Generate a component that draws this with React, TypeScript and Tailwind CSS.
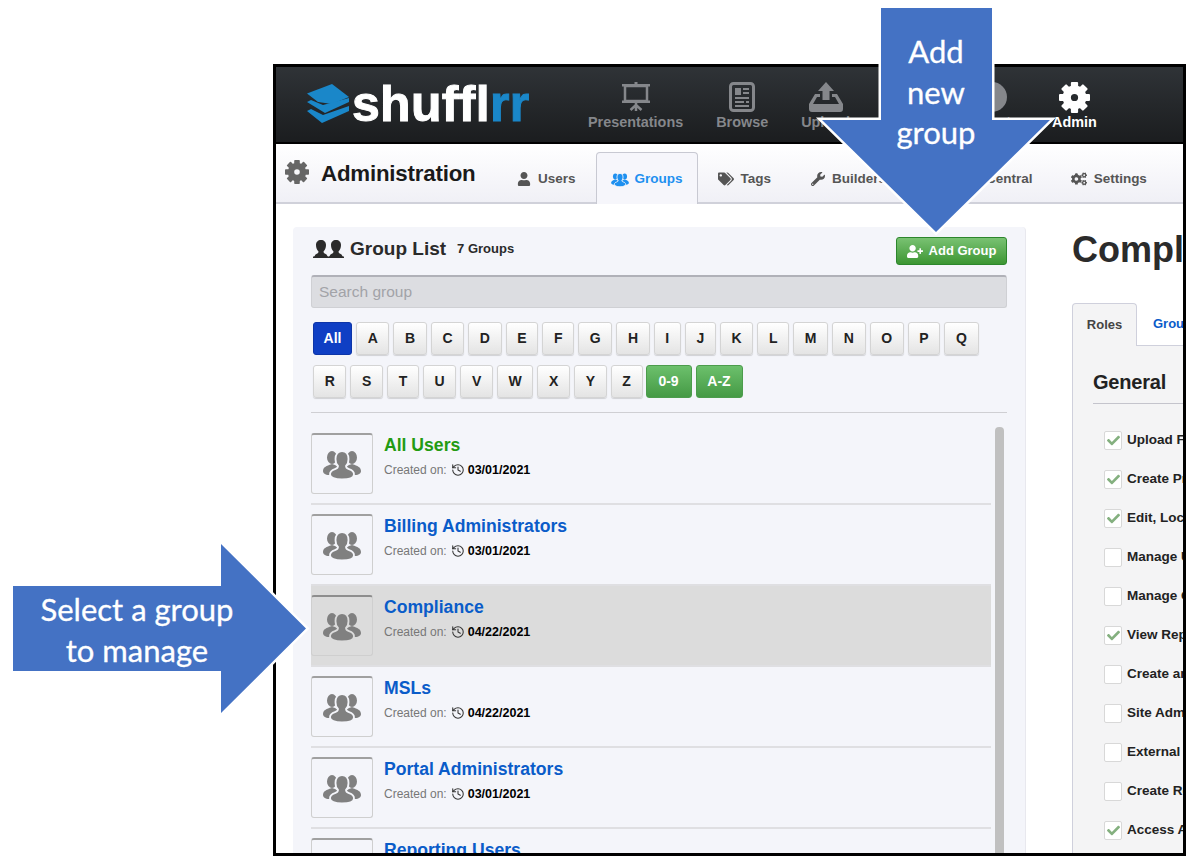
import React from 'react';
import { FaCheck, FaCogs, FaTags, FaUser, FaUserPlus, FaWrench } from 'react-icons/fa';
import { History } from 'lucide-react';

const letters1 = ['A', 'B', 'C', 'D', 'E', 'F', 'G', 'H', 'I', 'J', 'K', 'L', 'M', 'N', 'O', 'P', 'Q'];
const letters2 = ['R', 'S', 'T', 'U', 'V', 'W', 'X', 'Y', 'Z'];

const groups = [
  { name: 'All Users', date: '03/01/2021', green: true },
  { name: 'Billing Administrators', date: '03/01/2021' },
  { name: 'Compliance', date: '04/22/2021', selected: true },
  { name: 'MSLs', date: '04/22/2021' },
  { name: 'Portal Administrators', date: '03/01/2021' },
  { name: 'Reporting Users', date: '03/01/2021' },
];

const roles = [
  { label: 'Upload Files', on: true },
  { label: 'Create Presentations', on: true },
  { label: 'Edit, Lock and Delete', on: true },
  { label: 'Manage Users' },
  { label: 'Manage Groups' },
  { label: 'View Reports', on: true },
  { label: 'Create and Share' },
  { label: 'Site Administration' },
  { label: 'External Sharing' },
  { label: 'Create Reports' },
  { label: 'Access Analytics', on: true },
];

const GearIcon = ({ className }: { className: string }) => (
  <svg viewBox="0 0 30 30" className={className} fill="currentColor">
    <circle cx="15" cy="15" r="7.500" fill="none" stroke="currentColor" strokeWidth="8" />
    {[0, 45, 90, 135, 180, 225, 270, 315].map((a) => (
      <rect key={a} x="11.500" y="0" width="7" height="8" rx="1" transform={`rotate(${a} 15 15)`} />
    ))}
  </svg>
);

const PeopleIcon = ({ className, gap }: { className: string; gap: string }) => (
  <svg viewBox="0 0 38 32" className={className} fill="currentColor">
    <ellipse cx="9" cy="9.500" rx="5" ry="6.500" />
    <path d="M0 23c0-4 4-5 6-6l3-1 3 1 5 3v7H6c-4 0-6-2-6-4z" />
    <ellipse cx="29" cy="9.500" rx="5" ry="6.500" />
    <path d="M38 23c0-4-4-5-6-6l-3-1-3 1-5 3v7h11c4 0 6-2 6-4z" />
    <path className={gap} strokeWidth="1.800" d="M19 3c4 0 6.500 3.500 6.500 8 0 3-1 5.500-2.500 7 0 2 1 2.500 3 3.200 3 1 5 2.500 5 5 0 3.300-5 5.300-12 5.300s-12-2-12-5.300c0-2.500 2-4 5-5 2-.7 3-1.200 3-3.200-1.500-1.500-2.500-4-2.500-7 0-4.500 2.500-8 6.500-8z" />
  </svg>
);

const BoardIcon = () => (
  <svg viewBox="0 0 30 32" className="w-[30px] h-[32px]" fill="none" stroke="currentColor">
    <path d="M13.500 1h3v3h-3z" fill="currentColor" stroke="none" />
    <rect x="1" y="3" width="28" height="2.500" fill="currentColor" stroke="none" />
    <rect x="4" y="5" width="22" height="15" strokeWidth="2.500" />
    <rect x="1" y="19.500" width="28" height="2.500" fill="currentColor" stroke="none" />
    <path d="M15 22v8M9.500 29l5.500-5 5.500 5" strokeWidth="2.500" />
  </svg>
);

const BrowseIcon = () => (
  <svg viewBox="0 0 26 30" className="w-[26px] h-[30px]" fill="none">
    <rect x="1.500" y="1.500" width="23" height="27" rx="3" stroke="currentColor" strokeWidth="3" />
    <path fill="currentColor" d="M6 6h6v7H6zM14 6h6v2h-6zM14 10h6v2h-6zM6 15h14v2H6zM6 19h9v2H6zM17 19h3v2h-3zM6 23h14v2H6z" />
  </svg>
);

const UploadIcon = () => (
  <svg viewBox="0 0 34 30" className="w-[34px] h-[30px]" fill="currentColor">
    <path d="M17 0l8 9h-4.500v9h-7V9H9z" />
    <path d="M6 12h5v3H8l-4 7h26l-4-7h-3v-3h5l6 10v5c0 2-1 3-3 3H3c-2 0-3-1-3-3v-5z" />
  </svg>
);

const ClockIcon = () => (
  <svg viewBox="0 0 30 30" className="w-[30px] h-[30px]" fill="currentColor">
    <circle cx="15" cy="15" r="15" />
  </svg>
);

const NavItem = ({ label, icon, active }: { label: string; icon: React.ReactNode; active?: boolean }) => (
  <div className={`flex flex-col items-center gap-[1px] ${active ? 'text-white' : 'text-[#85878b]'}`}>
    <div className="h-[32px] flex items-center justify-center">{icon}</div>
    <span className="text-[14.400px] leading-[16px] font-bold whitespace-nowrap">{label}</span>
  </div>
);

const SubTab = ({ label, icon, active, className = '' }: { label: string; icon: React.ReactNode; active?: boolean; className?: string }) => (
  <div
    className={
      active
        ? 'flex items-center gap-[6px] h-[52px] -mb-[2px] z-10 px-[14px] pt-[2px] rounded-t-[4px] border border-b-0 border-[#c8c9d2] bg-[#f6f6fb] text-[#1e90f0]'
        : `flex items-center gap-[7px] h-[52px] -mb-[2px] px-[20px] pt-[2px] text-[#555] ${className}`
    }
  >
    {icon}
    <span className="text-[13.500px] font-bold whitespace-nowrap">{label}</span>
  </div>
);

const LetterBtn = ({ label }: { label: string }) => (
  <div className="h-[33px] px-[10.650px] flex items-center justify-center rounded-[3px] border border-[#d4d4d4] bg-linear-to-b from-white to-[#e4e4e4] text-[14px] font-bold text-[#222] shadow-[0_1px_1px_rgba(0,0,0,0.15)]">
    {label}
  </div>
);

const GreenBtn = ({ label, className }: { label: string; className: string }) => (
  <div className={`h-[33px] flex items-center justify-center rounded-[3px] border border-[#4c9c4c] bg-linear-to-b from-[#6cc06c] to-[#459a45] text-[14px] font-bold text-white ${className}`}>
    {label}
  </div>
);

const GroupRow = ({ name, date, green, selected }: { name: string; date: string; green?: boolean; selected?: boolean }) => (
  <div className={`h-[81px] flex gap-[11px] pt-[9px] border-b-2 border-[#dfdfe2] ${selected ? 'bg-[#dcdcdc]' : ''}`}>
    <div className={`w-[62px] h-[61px] shrink-0 flex items-center justify-center rounded-[3px] border border-[#cfcfcf] border-t-2 ${selected ? 'bg-[#dcdcdc] border-[#b4b4b4] border-t-[#8e8e8e]' : 'bg-[#f4f5fa] border-t-[#a0a0a0]'}`}>
      <PeopleIcon className="w-[38px] h-[32px] text-[#808080]" gap={selected ? 'stroke-[#dcdcdc]' : 'stroke-[#f4f5fa]'} />
    </div>
    <div className="flex flex-col pt-[1px]">
      <span className={`text-[17.600px] leading-[22px] font-bold ${green ? 'text-[#239b12]' : 'text-[#0a5cc9]'}`}>{name}</span>
      <div className="flex items-center mt-[5px] text-[12px] leading-[18px]">
        <span className="text-[#777]">Created on:</span>
        <History className="w-[14px] h-[14px] ml-[4px] mr-[3px] text-[#333]" strokeWidth={1.8} />
        <span className="text-[12.500px] font-bold text-black">{date}</span>
      </div>
    </div>
  </div>
);

const RoleRow = ({ label, on }: { label: string; on?: boolean }) => (
  <div className="h-[39px] flex items-center gap-[5px] pl-[11px]">
    <div className="w-[18px] h-[19px] shrink-0 flex items-center justify-center rounded-[2px] border border-[#d8d8d8] bg-white">
      {on && <FaCheck className="w-[13px] h-[13px] text-[#84b07f]" />}
    </div>
    <span className="text-[13.500px] font-bold text-[#222] whitespace-nowrap">{label}</span>
  </div>
);

export default function App() {
  return (
    <div className="relative w-[1200px] h-[865px] overflow-hidden bg-white font-['Liberation_Sans',Arial,sans-serif] pt-[64px] pl-[273px]">
      {/* Screenshot frame */}
      <div className="w-[913px] h-[792px] border-[3px] border-black flex flex-col overflow-hidden bg-white">
        {/* Top nav */}
        <div className="h-[77px] shrink-0 flex items-center bg-linear-to-b from-[#2f3337] to-[#1b1d1f] border-b-2 border-black">
          <div className="flex items-center ml-[31px] w-[281px] -mt-[2px]">
            <svg viewBox="0 0 42 39" className="w-[42px] h-[39px]">
              <path fill="#1a87c9" d="M0 9.500L25 0l17 13-17 7-14-2z" />
              <path fill="#1a87c9" d="M0 18l4-2 12 5 26-7v4L18 29z" />
              <path fill="#1a87c9" d="M0 27l4-2 12 6 26-9v5L15 39z" />
            </svg>
            <span className="ml-[3px] text-[50px] leading-[50px] font-bold tracking-[0.3px] text-white [-webkit-text-stroke:1px_currentColor]">
              shuffl<span className="text-[#1a87c9]">rr</span>
            </span>
          </div>
          <div className="flex items-start gap-[33px] pt-[2px]">
            <NavItem label="Presentations" icon={<BoardIcon />} />
            <NavItem label="Browse" icon={<BrowseIcon />} />
            <NavItem label="Upload" icon={<UploadIcon />} />
            <NavItem label="Library" icon={<BoardIcon />} />
            <NavItem label="Reports" icon={<ClockIcon />} />
            <NavItem label="Admin" icon={<GearIcon className="w-[31px] h-[31px]" />} active />
          </div>
        </div>

        {/* Sub nav */}
        <div className="h-[60px] shrink-0 flex items-end bg-linear-to-b from-white to-[#f0f0f6] border-b-2 border-[#d0d1da]">
          <div className="flex items-center self-stretch w-[221px]">
            <GearIcon className="ml-[9px] w-[24px] h-[24px] text-[#666] -mt-[3px]" />
            <span className="ml-[12px] mt-[2px] text-[22.300px] font-bold text-[#1a1a1a] tracking-[-0.2px] whitespace-nowrap">Administration</span>
          </div>
          <SubTab label="Users" icon={<FaUser className="w-[14px] h-[14px] text-[#555]" />} />
          <SubTab label="Groups" active icon={<PeopleIcon className="w-[18px] h-[15px]" gap="stroke-[#f4f5fa]" />} />
          <SubTab label="Tags" icon={<FaTags className="w-[16px] h-[16px]" />} />
          <SubTab label="Builders" icon={<FaWrench className="w-[14px] h-[14px]" />} />
          <SubTab label="Sales Central" icon={<GearIcon className="w-[14px] h-[14px]" />} />
          <SubTab label="Settings" className="-ml-[2px]" icon={<FaCogs className="w-[16px] h-[16px]" />} />
        </div>

        {/* Main */}
        <div className="flex-1 min-h-0 flex pl-[17px] pt-[23px] gap-[46px] overflow-hidden">
          {/* Group list panel */}
          <div className="w-[733px] shrink-0 rounded-t-[4px] bg-[#f4f5fa] border-r border-[#e8e8ee] px-[18px] pt-[10px]">
            <div className="flex items-center justify-between h-[28px]">
              <div className="flex items-center -mt-[4px]">
                <svg viewBox="0 0 31 18" className="ml-[2px] w-[31px] h-[18px] text-[#2b2b2b]" fill="currentColor">
                  <path d="M8 0c3 0 5 2 5 5 0 3-1 5-2.500 6.500 0 1.500 1 2 3 3l1.500 2.500H1l1.500-2.500c2-1 3-1.500 3-3C4 10 3 8 3 5c0-3 2-5 5-5z" />
                  <path d="M23 0c3 0 5 2 5 5 0 3-1 5-2.500 6.500 0 1.500 1 2 3 3L30 17H16l1.500-2.500c2-1 3-1.500 3-3C19 10 18 8 18 5c0-3 2-5 5-5z" />
                  <path d="M0 16.500h31V18H0z" />
                </svg>
                <span className="ml-[6px] text-[19px] font-bold text-[#2a2a2a]">Group List</span>
                <span className="ml-[11px] text-[13px] font-bold text-[#2a2a2a]">7 Groups</span>
              </div>
              <div className="w-[111px] h-[28px] flex items-center justify-center gap-[6px] rounded-[3px] border border-[#2c862c] bg-linear-to-b from-[#79c272] to-[#3c9632] text-[13px] font-bold text-white">
                <FaUserPlus className="w-[16px] h-[13px]" />
                Add Group
              </div>
            </div>
            <div className="mt-[10px] h-[33px] flex items-center px-[7px] rounded-[3px] border border-[#cfd0d4] border-t-2 border-t-[#b0b1b8] bg-[#dcdde1] text-[15.500px] text-[#a2a3a8]">
              Search group
            </div>
            <div className="mt-[14px] pl-[2px] flex flex-col gap-[10px]">
              <div className="flex gap-[4px]">
                <div className="w-[39px] h-[33px] flex items-center justify-center rounded-[3px] bg-[#0f3fc4] border border-[#0d35a8] text-[14px] font-bold text-white">All</div>
                {letters1.map((l) => <LetterBtn key={l} label={l} />)}
              </div>
              <div className="flex gap-[4px]">
                {letters2.map((l) => <LetterBtn key={l} label={l} />)}
                <GreenBtn label="0-9" className="w-[46px] -ml-px" />
                <GreenBtn label="A-Z" className="w-[47px]" />
              </div>
            </div>
            <div className="mt-[14px] h-px bg-[#cfcfd3]" />
            <div className="flex gap-[4px]">
              <div className="w-[680px] shrink-0 pt-[11px]">
                {groups.map((g) => <GroupRow key={g.name} {...g} />)}
              </div>
              <div className="w-[9px] h-[500px] mt-[14px] rounded-t-[4px] bg-[#c0c0c0]" />
            </div>
          </div>

          {/* Compliance detail */}
          <div className="w-[600px] shrink-0">
            <h1 className="mt-[3px] text-[36px] leading-[40px] font-bold text-[#2b2b2b] whitespace-nowrap">Compliance</h1>
            <div className="mt-[33px] flex items-end h-[42px]">
              <div className="w-[65px] h-[43px] -mb-px z-10 flex items-center justify-center rounded-t-[4px] border border-b-0 border-[#cfd0dc] bg-[#f4f4f5] text-[13px] font-bold text-[#444]">Roles</div>
              <div className="h-[42px] flex items-center pl-[16px] text-[13px] font-bold text-[#0a5cc9]">Groups</div>
            </div>
            <div className="border border-[#cfd0dc] bg-[#f4f4f5] pt-[22px] px-[20px] h-[600px]">
              <div className="text-[20px] leading-[28px] font-bold text-[#222] tracking-[-0.2px]">General</div>
              <div className="mt-[7px] mb-[17px] h-px bg-[#c4c4cc]" />
              {roles.map((r) => <RoleRow key={r.label} {...r} />)}
            </div>
          </div>
        </div>
      </div>

      {/* Callout: add new group */}
      <div className="absolute left-[820px] top-[6px] w-[232px] h-[229px]">
        <svg viewBox="0 0 232 229" className="w-full h-full overflow-visible">
          <path d="M61 2h111v112h58L116 226 2 114h59z" fill="#4472c4" stroke="#fff" strokeWidth="5" paintOrder="stroke" />
        </svg>
        <div className="absolute inset-x-0 top-[25px] text-center font-['Lato',sans-serif] text-[31px] leading-[40.500px] text-white [-webkit-text-stroke:0.3px_currentColor]">
          Add<br />new<br />group
        </div>
      </div>

      {/* Callout: select a group */}
      <div className="absolute left-[11px] top-[542px] w-[298px] h-[173px]">
        <svg viewBox="0 0 298 173" className="w-full h-full overflow-visible">
          <path d="M2 44h208V2l85 84.500L210 171v-42H2z" fill="#4472c4" stroke="#fff" strokeWidth="5" paintOrder="stroke" />
        </svg>
        <div className="absolute left-0 w-[252px] top-[47px] text-center font-['Lato',sans-serif] text-[31px] leading-[41px] text-white whitespace-nowrap [-webkit-text-stroke:0.3px_currentColor]">
          Select a group<br />to manage
        </div>
      </div>
    </div>
  );
}
